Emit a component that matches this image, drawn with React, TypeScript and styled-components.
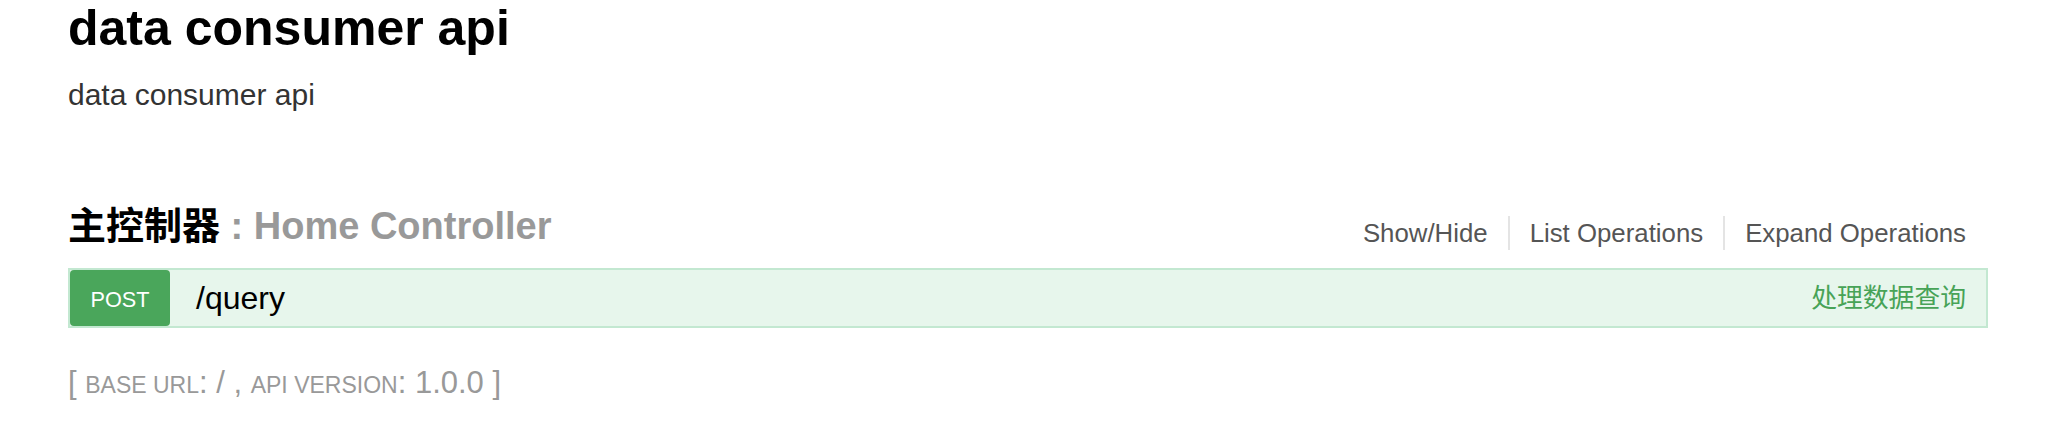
import React from 'react';
import styled, { createGlobalStyle } from 'styled-components';

const GlobalStyle = createGlobalStyle`
  html, body { margin: 0; padding: 0; background: #ffffff; }
  body {
    font-family: "Liberation Sans", "Noto Sans CJK SC", Arial, sans-serif;
  }
  * { box-sizing: border-box; }
`;

const Wrap = styled.div`
  width: 1920px;
  margin-left: 68px;
`;

const InfoTitle = styled.h1`
  margin: 0;
  padding: 0 0 20px;
  font-size: 50px;
  line-height: 57.5px;
  font-weight: bold;
  color: #000000;
`;

const InfoDesc = styled.div`
  font-size: 30px;
  line-height: 34.5px;
  color: #333333;
  padding-bottom: 20px;
`;

const Resource = styled.section`
  margin-top: 53px;
`;

const HeadingRow = styled.div`
  display: flex;
  justify-content: space-between;
  align-items: flex-start;
`;

const ResourceTitle = styled.h2`
  margin: 0;
  padding: 20px 0;
  font-size: 38px;
  line-height: 43px;
  font-weight: bold;
  color: #999999;
`;

const ResourceName = styled.a`
  color: #000000;
  text-decoration: none;
`;

const Options = styled.ul`
  list-style: none;
  margin: 31px 0 0;
  padding: 0;
  display: flex;
`;

const OptionItem = styled.li`
  padding: 4px 20px;
  font-size: 25.8px;
  line-height: 26px;
  color: #555555;
  border-right: 2px solid #e4e4e4;
  &:last-child {
    border-right: none;
    padding-right: 22px;
  }
`;

const OperationBar = styled.div`
  display: flex;
  align-items: center;
  border: 2px solid #c3e8d1;
  background: #e7f6ec;
`;

const MethodBadge = styled.span<{ $color: string }>`
  display: inline-block;
  width: 100px;
  padding: 13px 0 9px;
  font-size: 21.7px;
  line-height: 34px;
  text-align: center;
  text-transform: uppercase;
  color: #ffffff;
  background: ${(p) => p.$color};
  border-radius: 4px;
`;

const Path = styled.span`
  margin-left: 26px;
  font-size: 32px;
  line-height: 34px;
  color: #000000;
`;

const Summary = styled.span`
  margin-left: auto;
  padding-right: 20px;
  font-size: 25.8px;
  line-height: 34px;
  color: #47a357;
`;

const Footer = styled.h4`
  margin: 37px 0 0;
  font-size: 31px;
  line-height: 35px;
  font-weight: normal;
  color: #999999;
`;

const SmallCaps = styled.span`
  font-size: 23px;
  text-transform: uppercase;
`;

export default function App() {
  return (
    <>
      <GlobalStyle />
      <Wrap>
        <InfoTitle>data consumer api</InfoTitle>
        <InfoDesc>data consumer api</InfoDesc>
        <Resource>
          <HeadingRow>
            <ResourceTitle>
              <ResourceName>主控制器</ResourceName> : Home Controller
            </ResourceTitle>
            <Options>
              <OptionItem>Show/Hide</OptionItem>
              <OptionItem>List Operations</OptionItem>
              <OptionItem>Expand Operations</OptionItem>
            </Options>
          </HeadingRow>
          <OperationBar>
            <MethodBadge $color="#4aa65b">post</MethodBadge>
            <Path>/query</Path>
            <Summary>处理数据查询</Summary>
          </OperationBar>
        </Resource>
        <Footer>
          [ <SmallCaps>base url</SmallCaps>: / , <SmallCaps>api version</SmallCaps>: 1.0.0 ]
        </Footer>
      </Wrap>
    </>
  );
}
